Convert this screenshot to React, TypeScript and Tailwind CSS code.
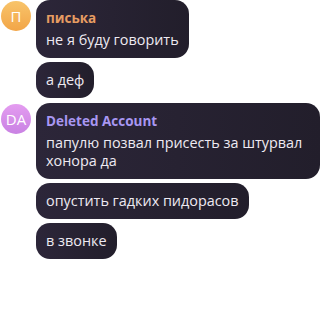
const font = { fontFamily: '"Open Sans", "Noto Sans", sans-serif' };

type Msg = { text: string };
type Group = {
  name: string;
  initials: string;
  avatar: string;
  nameColor: string;
  messages: Msg[];
};

const groups: Group[] = [
  {
    name: "писька",
    initials: "П",
    avatar: "bg-gradient-to-b from-[#f8c46a] to-[#f2a547]",
    nameColor: "text-[#e69c62]",
    messages: [{ text: "не я буду говорить" }, { text: "а деф" }],
  },
  {
    name: "Deleted Account",
    initials: "DA",
    avatar: "bg-gradient-to-b from-[#e49cf0] to-[#c982e3]",
    nameColor: "text-[#a897f2]",
    messages: [
      { text: "папулю позвал присесть за штурвал хонора да" },
      { text: "опустить гадких пидорасов" },
      { text: "в звонке" },
    ],
  },
];

const Bubble = ({ name, nameColor, text }: { name?: string; nameColor?: string; text: string }) => (
  <div className="w-fit max-w-[284px] rounded-[14px] bg-gradient-to-r from-[#2c2639] to-[#221e2b] px-[10px] py-[9px] text-[#eeeaf2]">
    {name && (
      <div className={`mb-[4px] text-[13.5px] font-bold leading-[18px] ${nameColor}`}>{name}</div>
    )}
    <div className="text-[14.4px] leading-[18px]">{text}</div>
  </div>
);

export default function App() {
  return (
    <div className="w-[320px] h-[309px] bg-white overflow-hidden" style={font}>
      <div className="flex flex-col gap-[5px]">
        {groups.map((g) => (
          <div key={g.name} className="flex gap-[5px]">
            <div
              className={`ml-[1px] mt-[1px] flex h-[30px] w-[30px] shrink-0 items-center justify-center rounded-full text-[15px] text-white ${g.avatar}`}
            >
              {g.initials}
            </div>
            <div className="flex flex-col gap-[4px]">
              {g.messages.map((m, i) => (
                <Bubble
                  key={i}
                  name={i === 0 ? g.name : undefined}
                  nameColor={g.nameColor}
                  text={m.text}
                />
              ))}
            </div>
          </div>
        ))}
      </div>
    </div>
  );
}
